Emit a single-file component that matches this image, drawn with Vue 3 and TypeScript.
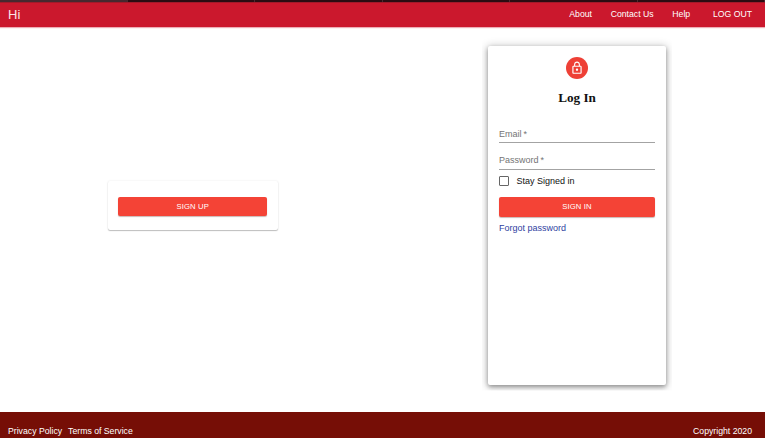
<script setup lang="ts">
import { ref } from 'vue'

const navLinks: string[] = ['About', 'Contact Us', 'Help']
const stay = ref(false)
</script>

<template>
  <div class="page">
    <div class="topstrip"><span v-for="n in 6" :key="n" class="tab" /></div>
    <header class="bar">
      <span class="brand">Hi</span>
      <nav class="nav">
        <a v-for="link in navLinks" :key="link">{{ link }}</a>
        <a class="logout">LOG OUT</a>
      </nav>
    </header>
    <main class="main">
      <section class="signup">
        <button class="btn" type="button">SIGN UP</button>
      </section>
      <section class="login">
        <div class="avatar">
          <svg viewBox="0 0 24 24" width="14" height="14">
            <path
              fill="#fff"
              d="M12 17c1.1 0 2-.9 2-2s-.9-2-2-2-2 .9-2 2 .9 2 2 2zm6-9h-1V6c0-2.76-2.24-5-5-5S7 3.24 7 6v2H6c-1.1 0-2 .9-2 2v10c0 1.1.9 2 2 2h12c1.1 0 2-.9 2-2V10c0-1.1-.9-2-2-2zM8.9 6c0-1.71 1.39-3.1 3.1-3.1s3.1 1.39 3.1 3.1v2H8.9V6zM18 20H6V10h12v10z"
            />
          </svg>
        </div>
        <h1 class="title">Log In</h1>
        <div class="field email">Email<span class="star">*</span></div>
        <div class="field password">Password<span class="star">*</span></div>
        <div class="stay" @click="stay = !stay">
          <span class="box" :class="{ on: stay }" />
          <span>Stay Signed in</span>
        </div>
        <button class="btn" type="button">SIGN IN</button>
        <a class="forgot">Forgot password</a>
      </section>
    </main>
    <footer class="footer">
      <a>Privacy Policy</a>
      <a>Terms of Service</a>
      <span class="copy">Copyright 2020</span>
    </footer>
  </div>
</template>

<style>
body {
  margin: 0;
  background: #fff;
  overflow: hidden;
}
</style>

<style scoped>
.page {
  width: 765px;
  height: 438px;
  display: flex;
  flex-direction: column;
  overflow: hidden;
  box-sizing: border-box;
  font: 8.7px/12px "Liberation Sans", Arial, sans-serif;
  color: #111;
}
.topstrip {
  flex: none;
  display: flex;
  height: 2px;
  background: #2b0c12;
}
.tab {
  width: 127px;
  border-right: 1px solid #4b2a30;
}
.tab:first-child {
  background: #48282f;
}
.bar {
  flex: none;
  height: 25px;
  box-sizing: border-box;
  display: flex;
  align-items: center;
  justify-content: space-between;
  padding: 0 13px 2px 8px;
  background: #cb182d;
  border-top: 1px solid #a31929;
  color: #fff;
  box-shadow: 0 1px 1px rgba(203, 24, 45, 0.35);
}
.brand {
  font-size: 13px;
  line-height: 16px;
  padding-top: 1px;
  color: #fbe3e6;
}
.nav {
  display: flex;
  gap: 18.7px;
}
.logout {
  margin-left: 4px;
}
.main {
  flex: none;
  height: 385px;
  box-sizing: border-box;
  display: flex;
  align-items: flex-start;
  justify-content: space-between;
  padding: 18.5px 99px 0 108px;
}
.signup {
  width: 169.5px;
  height: 49px;
  box-sizing: border-box;
  margin-top: 135.5px;
  padding: 16px 10.3px 0;
  border-radius: 2px;
  box-shadow: 0 1px 1px rgba(0, 0, 0, 0.24), 0 0 2px rgba(0, 0, 0, 0.1);
}
.btn {
  display: block;
  width: 100%;
  height: 19px;
  padding: 0;
  border: 0;
  border-radius: 2px;
  background: #f44336;
  color: #fff;
  font: 7.7px/19px "Liberation Sans", Arial, sans-serif;
  letter-spacing: 0.12px;
  box-shadow: 0 1px 1px rgba(80, 20, 10, 0.3);
}
.login {
  width: 178px;
  height: 339px;
  box-sizing: border-box;
  display: flex;
  flex-direction: column;
  padding: 11.5px 11px 0;
  border-radius: 2px;
  background: #fff;
  font-size: 9px;
  box-shadow: 0 2px 4px rgba(0, 0, 0, 0.32), 0 1px 9px 1px rgba(0, 0, 0, 0.22);
  clip-path: inset(-10px -6px -6px -6px);
}
.avatar {
  width: 22px;
  height: 22px;
  align-self: center;
  display: flex;
  align-items: center;
  justify-content: center;
  border-radius: 50%;
  background: #ee4036;
}
.title {
  margin: 10px 0 0;
  font: bold 13.2px/18px "Liberation Serif", "Times New Roman", serif;
  text-align: center;
  color: #111;
}
.field {
  box-sizing: border-box;
  border-bottom: 1px solid #a3a3a3;
  color: #747474;
}
.star {
  margin-left: 2px;
}
.email {
  height: 15px;
  margin-top: 21px;
}
.password {
  height: 16px;
  margin-top: 10.5px;
}
.stay {
  display: flex;
  align-items: center;
  gap: 7.5px;
  margin-top: 5px;
}
.box {
  width: 10px;
  height: 10px;
  box-sizing: border-box;
  border: 1px solid #666;
  border-radius: 1px;
}
.box.on {
  background: #f44336;
}
.login .btn {
  flex: none;
  margin-top: 10.5px;
  height: 20px;
  line-height: 20px;
}
.forgot {
  margin-top: 4.5px;
  color: #303f9f;
}
.footer {
  flex: 1;
  display: flex;
  gap: 6px;
  padding: 13px 13px 0 8px;
  background: #760e06;
  color: #fff;
}
.copy {
  margin-left: auto;
}
</style>
